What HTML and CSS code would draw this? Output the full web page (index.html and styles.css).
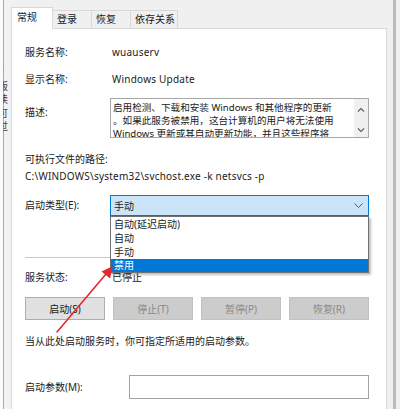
FILE: index.html
```html
<!DOCTYPE html>
<html lang="zh-CN">
<head>
<meta charset="utf-8">
<title>Windows Update 属性</title>
<link rel="stylesheet" href="styles.css">
</head>
<body>
<div class="screen">
  <div class="bgwin">
    <div class="frags"><span>v</span><span>版</span><span>读</span><span>可</span><span>过</span></div>
  </div>
  <div class="dialog">
    <div class="tabs">
      <div class="tab active">常规</div>
      <div class="tab t2">登录</div>
      <div class="tab t3">恢复</div>
      <div class="tab t4">依存关系</div>
    </div>
    <div class="panel">
      <div class="row r1"><span class="label">服务名称:</span><span class="value lat">wuauserv</span></div>
      <div class="row r2"><span class="label">显示名称:</span><span class="value lat">Windows Update</span></div>
      <div class="row desc">
        <span class="label dlabel">描述:</span>
        <div class="descbox">
          <div class="desctext">启用检测、下载和安装 Windows 和其他程序的更新<br>。如果此服务被禁用，这台计算机的用户将无法使用<br>Windows 更新或其自动更新功能，并且这些程序将</div>
          <div class="vscroll">
            <svg class="sarrow" viewBox="0 0 8 5" width="8" height="5"><polyline points="1,4.5 4,1.5 7,4.5" fill="none" stroke="#606060" stroke-width="1.1"/></svg>
            <svg class="sarrow" viewBox="0 0 8 5" width="8" height="5"><polyline points="1,0.5 4,3.5 7,0.5" fill="none" stroke="#606060" stroke-width="1.1"/></svg>
          </div>
        </div>
      </div>
      <div class="plain pathlabel">可执行文件的路径:</div>
      <div class="plain path lat">C:\WINDOWS\system32\svchost.exe -k netsvcs -p</div>
      <div class="row startup">
        <span class="label tall">启动类型(E):</span>
        <div class="combo">
          <div class="combobox">
            <span>手动</span>
            <svg viewBox="0 0 9 5" width="9" height="5"><polyline points="0.5,0.5 4.5,4.5 8.5,0.5" fill="none" stroke="#5a5a5a" stroke-width="1"/></svg>
          </div>
          <div class="droplist">
            <div class="opt">自动(延迟启动)</div>
            <div class="opt">自动</div>
            <div class="opt">手动</div>
            <div class="opt sel">禁用</div>
          </div>
        </div>
      </div>
      <div class="sep"></div>
      <div class="row status"><span class="label">服务状态:</span><span class="value">已停止</span></div>
      <div class="buttons">
        <div class="btn">启动(S)</div>
        <div class="btn disabled">停止(T)</div>
        <div class="btn disabled">暂停(P)</div>
        <div class="btn disabled">恢复(R)</div>
      </div>
      <div class="plain hint">当从此处启动服务时，你可指定所适用的启动参数。</div>
      <div class="row param">
        <span class="label plabel">启动参数(M):</span>
        <div class="inputbox"></div>
      </div>
    </div>
  </div>
  <div class="gapstrip"></div>
  <div class="edge"></div>
  <svg class="arrow" viewBox="0 0 400 409" width="400" height="409">
    <line x1="57" y1="332" x2="106" y2="274" stroke="#e02a2e" stroke-width="1.6" stroke-linecap="round"/>
    <polygon points="113,266 110,278.5 101.5,271.5" fill="#e02a2e"/>
  </svg>
</div>
</body>
</html>
```
FILE: styles.css
```css
html, body {
  margin: 0;
  padding: 0;
}
body {
  background: #f0f0f0;
  font-family: "Noto Sans", "Noto Sans CJK SC", sans-serif;
  font-size: 10px;
  color: #1a1a1a;
}
.screen {
  position: relative;
  width: 400px;
  height: 409px;
  overflow: hidden;
  display: flex;
}
.bgwin {
  width: 11px;
  flex: none;
  overflow: hidden;
  background: #f2f2f2;
  border-left: 3px solid #fbfbfb;
  box-sizing: border-box;
  box-shadow: inset 1px 0 0 #a9a9a9;
}
.frags {
  display: flex;
  flex-direction: column;
  padding-top: 66px;
  margin-left: -5px;
  font-size: 10px;
  line-height: 13.5px;
  color: #444;
}
.dialog {
  width: 376px;
  flex: none;
  display: flex;
  flex-direction: column;
  padding-top: 7px;
  box-sizing: border-box;
}
.tabs {
  display: flex;
  align-items: flex-end;
  height: 22px;
  margin-bottom: -1px;
  position: relative;
  z-index: 1;
}
.tab {
  box-sizing: border-box;
  height: 18px;
  margin-bottom: 1px;
  border: 1px solid #d9d9d9;
  border-bottom: none;
  border-left: none;
  background: #f0f0f0;
  line-height: 17px;
  padding-left: 4px;
}
.tab.active {
  height: 22px;
  margin-bottom: 0;
  background: #fff;
  border-left: 1px solid #d9d9d9;
  width: 42px;
  padding-left: 5px;
  line-height: 19px;
}
.t2 { width: 39px; }
.t3 { width: 39px; }
.t4 { width: 47px; }
.panel {
  flex: 1;
  background: #fff;
  border: 1px solid #d9d9d9;
  border-bottom: none;
  padding: 16px 17px 0 13px;
  display: flex;
  flex-direction: column;
}
.row {
  display: grid;
  grid-template-columns: 85px 1fr;
  line-height: 14px;
}
.value {
  padding-left: 2px;
}
.lat {
  letter-spacing: 0.22px;
}
.plain {
  line-height: 14px;
  white-space: nowrap;
}
.r2 { margin-top: 13px; }
.desc { margin-top: 12px; }
.dlabel { padding-top: 7px; }
.descbox {
  height: 40px;
  box-sizing: border-box;
  border: 1px solid #a8a8a8;
  display: flex;
  overflow: hidden;
}
.desctext {
  flex: 1;
  padding: 2px 0 0 2px;
  font-size: 9.6px;
  line-height: 13px;
  white-space: nowrap;
  overflow: hidden;
}
.vscroll {
  width: 14px;
  background: #f0f0f0;
  display: flex;
  flex-direction: column;
  align-items: center;
  justify-content: space-between;
  padding: 8px 0 4px;
}
.pathlabel { margin-top: 14px; }
.path { margin-top: 3px; }
.startup { margin-top: 12px; }
.tall { line-height: 21px; }
.combo {
  position: relative;
}
.combobox {
  height: 21px;
  box-sizing: border-box;
  background: #cce4f7;
  border: 1px solid #0078d7;
  display: flex;
  align-items: center;
  justify-content: space-between;
  padding: 0 5px 0 3px;
}
.droplist {
  position: absolute;
  top: 21px;
  left: 0;
  right: 0;
  background: #fff;
  border: 1px solid #707070;
  box-shadow: 2px 2px 2px rgba(0, 0, 0, 0.25);
  z-index: 2;
}
.opt {
  height: 14px;
  line-height: 14px;
  padding-left: 3px;
}
.opt.sel {
  height: 13px;
  line-height: 13px;
  background: #0078d7;
  color: #fff;
}
.sep {
  margin-top: 41px;
  height: 1px;
  background: #c9c9c9;
}
.status { margin-top: 12px; }
.buttons {
  margin-top: 13px;
  display: grid;
  grid-template-columns: repeat(4, 1fr);
  gap: 8px;
}
.btn {
  height: 23px;
  box-sizing: border-box;
  border: 1px solid #adadad;
  background: #e1e1e1;
  display: flex;
  align-items: center;
  justify-content: center;
}
.btn.disabled {
  background: #cccccc;
  border-color: #c2c2c2;
  color: #8a8a8a;
}
.hint { margin-top: 14px; }
.param {
  margin-top: 27px;
  grid-template-columns: 104px 1fr;
}
.plabel { line-height: 24px; }
.inputbox {
  height: 24px;
  box-sizing: border-box;
  border: 1px solid #a3a3a3;
  background: #fff;
}
.gapstrip {
  width: 6px;
  flex: none;
}
.edge {
  width: 3px;
  flex: none;
  background: #bcbcbc;
}
.arrow {
  position: absolute;
  left: 0;
  top: 0;
  pointer-events: none;
  z-index: 5;
}
```
